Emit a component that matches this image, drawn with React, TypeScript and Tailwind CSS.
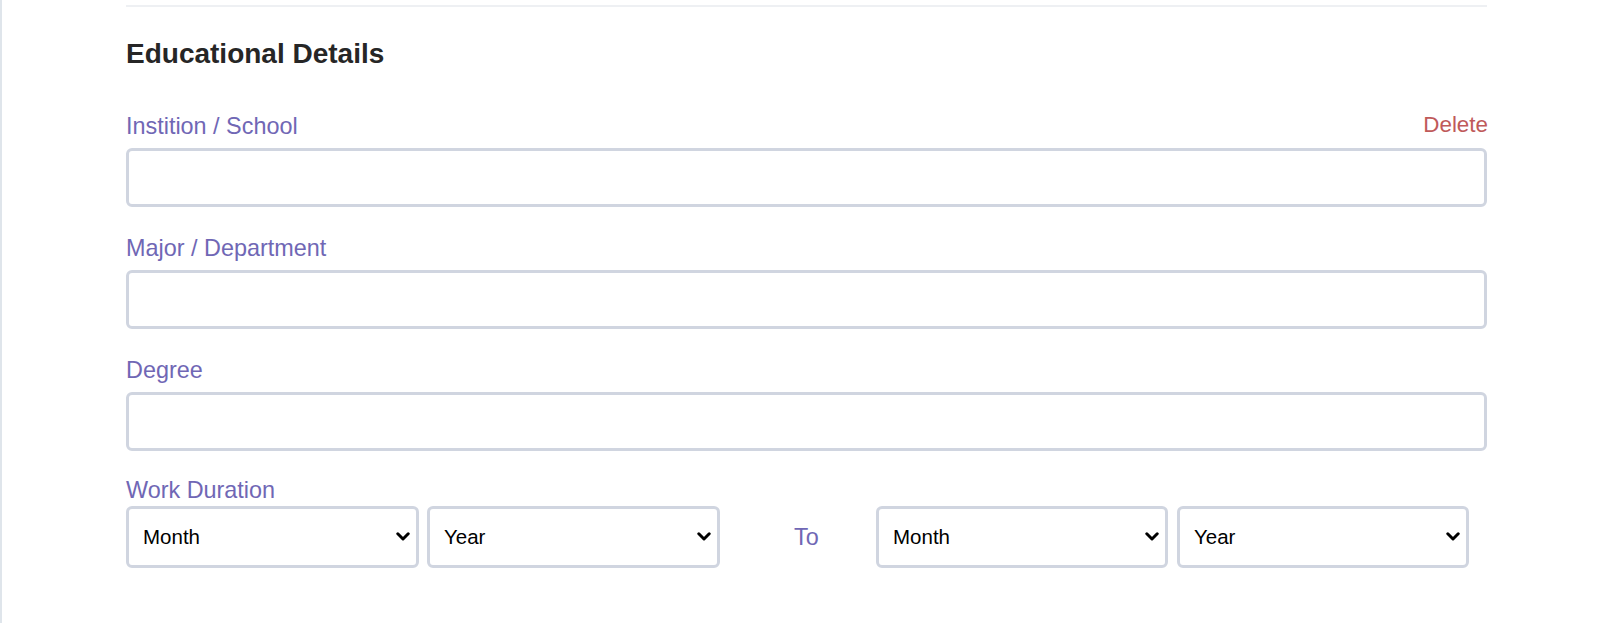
import React from "react";

const labelCls = "text-[23.4px] leading-[28px] text-[#7067b5]";
const inputCls =
  "block w-full h-[59px] mt-[8px] rounded-[6px] border-[3px] border-[#d0d5e0] bg-white outline-none px-3 text-[20px] text-black";

function Chevron() {
  return (
    <svg
      width="14"
      height="9"
      viewBox="0 0 14 9"
      className="pointer-events-none absolute right-[9px] top-[26px]"
    >
      <path d="M1.8 1.8 L7 7 L12.2 1.8" fill="none" stroke="#000" strokeWidth="3" strokeLinecap="round" strokeLinejoin="round" />
    </svg>
  );
}

function Select({ label, w }: { label: string; w: "a" | "b" }) {
  return (
    <div className={(w === "a" ? "w-[293px]" : "w-[292px]") + " relative h-[62px] shrink-0"}>
      <select
        defaultValue={label}
        className="appearance-none w-full h-full rounded-[6px] border-[3px] border-[#d0d5e0] bg-white pl-[14px] pr-8 text-[20.5px] text-black outline-none"
        style={{ fontFamily: '"Liberation Sans", Arial, sans-serif' }}
      >
        <option>{label}</option>
      </select>
      <Chevron />
    </div>
  );
}

export default function App() {
  return (
    <div
      className="min-h-[623px] border-l-2 border-[#dfe5eb] bg-white pl-[124px] pt-[5px]"
      style={{ fontFamily: '"Liberation Sans", Arial, sans-serif' }}
    >
      <div className="w-[1361px]">
        <div className="h-[2px] bg-[#eef0f3]" />
        <h2 className="mt-[31px] text-[28px] leading-[32px] font-bold text-[#262626]">
          Educational Details
        </h2>

        <div className="mt-[42px]">
          <div className="flex items-start justify-between">
            <label className={labelCls}>Instition / School</label>
            <button className="mr-[-1px] text-[22.4px] leading-[26px] text-[#bf5a5a]">Delete</button>
          </div>
          <input type="text" className={inputCls} />
        </div>

        <div className="mt-[27px]">
          <label className={labelCls + " block"}>Major / Department</label>
          <input type="text" className={inputCls} />
        </div>

        <div className="mt-[27px]">
          <label className={labelCls + " block"}>Degree</label>
          <input type="text" className={inputCls} />
        </div>

        <div className="mt-[25px]">
          <label className={labelCls + " block"}>Work Duration</label>
          <div className="mt-[2px] flex items-center">
            <Select label="Month" w="a" />
            <div className="ml-2">
              <Select label="Year" w="a" />
            </div>
            <span className="ml-[74px] w-[27px] text-[23.4px] leading-[28px] text-[#7067b5]">To</span>
            <div className="ml-[55px]">
              <Select label="Month" w="b" />
            </div>
            <div className="ml-[9px]">
              <Select label="Year" w="b" />
            </div>
          </div>
        </div>
      </div>
    </div>
  );
}
